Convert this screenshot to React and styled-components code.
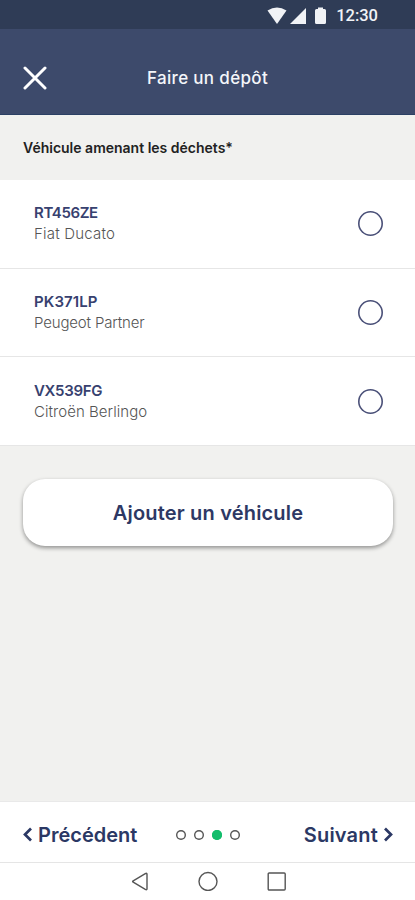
import React from 'react'
import styled, { createGlobalStyle } from 'styled-components'

const GlobalStyle = createGlobalStyle`
  * {
    box-sizing: border-box;
  }
  body {
    margin: 0;
    background-color: #f1f1ef;
    font-family: Inter, 'Liberation Sans', sans-serif;
  }
  button {
    font-family: inherit;
    background: none;
    border: 0;
    padding: 0;
    cursor: pointer;
  }
  svg {
    display: block;
    flex: none;
  }
`

const StyledScreen = styled.div`
  display: flex;
  flex-direction: column;
  width: 100%;
  height: 900px;
  overflow: hidden;
`

const StyledStatusBar = styled.div`
  display: flex;
  align-items: center;
  justify-content: flex-end;
  height: 29px;
  padding: 2px 37px 0 0;
  background-color: #2f3c56;
  color: #f1f3f6;
`

const StyledClock = styled.span`
  margin-left: 8px;
  font-family: Roboto, sans-serif;
  font-size: 16.5px;
  font-weight: 500;
  line-height: 18px;
  padding-top: 1px;
`

const StyledHeader = styled.header`
  display: grid;
  grid-template-columns: 48px 1fr 48px;
  align-items: center;
  height: 86px;
  padding: 12px 11px 0;
  background-color: #3d4a6b;
  border-bottom: 1px solid #2b4064;
`

const StyledClose = styled.button`
  display: flex;
  justify-content: center;
  padding-top: 1px;
  color: #fff;
`

const StyledTitle = styled.h1`
  margin: 0;
  text-align: center;
  color: #f4f6fa;
  font-size: 17px;
  font-weight: 500;
  line-height: 24px;
  letter-spacing: 0.33px;
`

const StyledLabel = styled.h2`
  display: flex;
  align-items: center;
  height: 65px;
  margin: 0;
  padding: 0 23px;
  color: #222;
  font-size: 14px;
  font-weight: 600;
`

const StyledList = styled.ul`
  margin: 0;
  padding: 0;
  list-style: none;
  background-color: #fff;
`

const StyledVehicle = styled.li`
  display: flex;
  align-items: center;
  justify-content: space-between;
  height: 88.67px;
  padding: 0 32px 0 34px;
  border-bottom: 1px solid #e6e6e6;
`

const StyledPlate = styled.div`
  color: #37416f;
  font-size: 15px;
  font-weight: 600;
  line-height: 20px;
  letter-spacing: ${({ $spacing }) => $spacing}px;
`

const StyledModel = styled.div`
  padding-top: 1px;
  color: #555;
  font-size: 15px;
  font-weight: 300;
  line-height: 20px;
  letter-spacing: ${({ $spacing }) => $spacing}px;
`

const StyledRadio = styled.button`
  width: 25px;
  height: 25px;
  border-radius: 50%;
  box-shadow: inset 0 0 0 1.6px #4a5078;
`

const StyledMain = styled.main`
  flex: 1;
  padding: 33px 22px 0 23px;
`

const StyledAddButton = styled.button`
  width: 100%;
  height: 67px;
  padding-top: 2px;
  border-radius: 22px;
  background-color: #fff;
  box-shadow: 0 2px 4px rgba(0, 0, 0, 0.4);
  color: #2d3864;
  font-size: 20px;
  font-weight: 600;
  letter-spacing: 0.18px;
`

const StyledFooter = styled.footer`
  display: grid;
  grid-template-columns: 1fr auto 1fr;
  align-items: center;
  height: 62px;
  padding: 5px 22px 0 23px;
  background-color: #fff;
  border-top: 1px solid #e9e9e9;
  border-bottom: 1px solid #e5e5e5;
`

const StyledStep = styled.button`
  display: flex;
  align-items: center;
  justify-content: ${({ $end }) => ($end ? 'flex-end' : 'flex-start')};
  gap: 6px;
  color: #2b3864;
  font-size: 20px;
  font-weight: 600;
  line-height: 26px;
  letter-spacing: ${({ $end }) => ($end ? '0.2px' : '0')};
`

const StyledDots = styled.div`
  display: flex;
  gap: 7.7px;
  padding-top: 1px;
`

const StyledDot = styled.span`
  width: 10px;
  height: 10px;
  border-radius: 50%;
  box-shadow: inset 0 0 0 1.4px ${({ $active }) => ($active ? '#14bd6c' : '#555')};
  background-color: ${({ $active }) => ($active ? '#14bd6c' : '#fff')};
`

const StyledNavBar = styled.nav`
  display: flex;
  justify-content: center;
  gap: 49px;
  height: 37px;
  padding-top: 8px;
  background-color: #fff;
`

const vehicles = [
  { plate: 'RT456ZE', model: 'Fiat Ducato', plateSpacing: -0.4, modelSpacing: 0.2 },
  { plate: 'PK371LP', model: 'Peugeot Partner', plateSpacing: 0.1, modelSpacing: -0.16 },
  { plate: 'VX539FG', model: 'Citroën Berlingo', plateSpacing: -0.3, modelSpacing: 0.05 },
]

const StatusIcons = () => (
  <svg width="61" height="20" viewBox="0 0 61 20" fill="currentColor">
    <path d="M0.5 4.500Q10 -1.500 19.500 4.500L10 18Z" />
    <path d="M23 18L39 2V18Z" />
    <path d="M51 3V1.500H56V3H57.500Q59 3 59 4.500V16.500Q59 18 57.500 18H49.500Q48 18 48 16.500V4.500Q48 3 49.500 3Z" />
  </svg>
)

const Chevron = ({ d }) => (
  <svg width="9" height="15" viewBox="0 0 9 15" fill="none" stroke="currentColor" strokeWidth="2.7">
    <path d={d} />
  </svg>
)

const App = () => {
  return (
    <StyledScreen>
      <GlobalStyle />
      <StyledStatusBar>
        <StatusIcons />
        <StyledClock>12:30</StyledClock>
      </StyledStatusBar>
      <StyledHeader>
        <StyledClose aria-label="Fermer">
          <svg width="24" height="24" viewBox="0 0 24 24" fill="none" stroke="currentColor" strokeWidth="3" strokeLinecap="round">
            <path d="M2 2L22 22M22 2L2 22" />
          </svg>
        </StyledClose>
        <StyledTitle>Faire un dépôt</StyledTitle>
      </StyledHeader>
      <StyledLabel>Véhicule amenant les déchets*</StyledLabel>
      <StyledList>
        {vehicles.map(({ plate, model, plateSpacing, modelSpacing }) => (
          <StyledVehicle key={plate}>
            <div>
              <StyledPlate $spacing={plateSpacing}>{plate}</StyledPlate>
              <StyledModel $spacing={modelSpacing}>{model}</StyledModel>
            </div>
            <StyledRadio aria-label={plate} />
          </StyledVehicle>
        ))}
      </StyledList>
      <StyledMain>
        <StyledAddButton>Ajouter un véhicule</StyledAddButton>
      </StyledMain>
      <StyledFooter>
        <StyledStep>
          <Chevron d="M8 1.500L2 7.500L8 13.500" />
          Précédent
        </StyledStep>
        <StyledDots>
          <StyledDot />
          <StyledDot />
          <StyledDot $active />
          <StyledDot />
        </StyledDots>
        <StyledStep $end>
          Suivant
          <Chevron d="M1 1.500L7 7.500L1 13.500" />
        </StyledStep>
      </StyledFooter>
      <StyledNavBar>
        <svg width="20" height="20" viewBox="0 0 20 20" fill="none" stroke="#555" strokeWidth="1.400" strokeLinejoin="round">
          <path d="M4.200 9.800L16.300 2.600Q18 1.700 18 3.300V17.700Q18 19.300 16.300 18.400L4.200 11.200Q3 10.500 4.200 9.800Z" />
        </svg>
        <svg width="20" height="20" viewBox="0 0 20 20" fill="none" stroke="#555" strokeWidth="1.400">
          <circle cx="10" cy="10.500" r="9" />
        </svg>
        <svg width="20" height="20" viewBox="0 0 20 20" fill="none" stroke="#555" strokeWidth="1.400">
          <rect x="1.200" y="2" width="17" height="17" rx="1" />
        </svg>
      </StyledNavBar>
    </StyledScreen>
  )
}

export default App
